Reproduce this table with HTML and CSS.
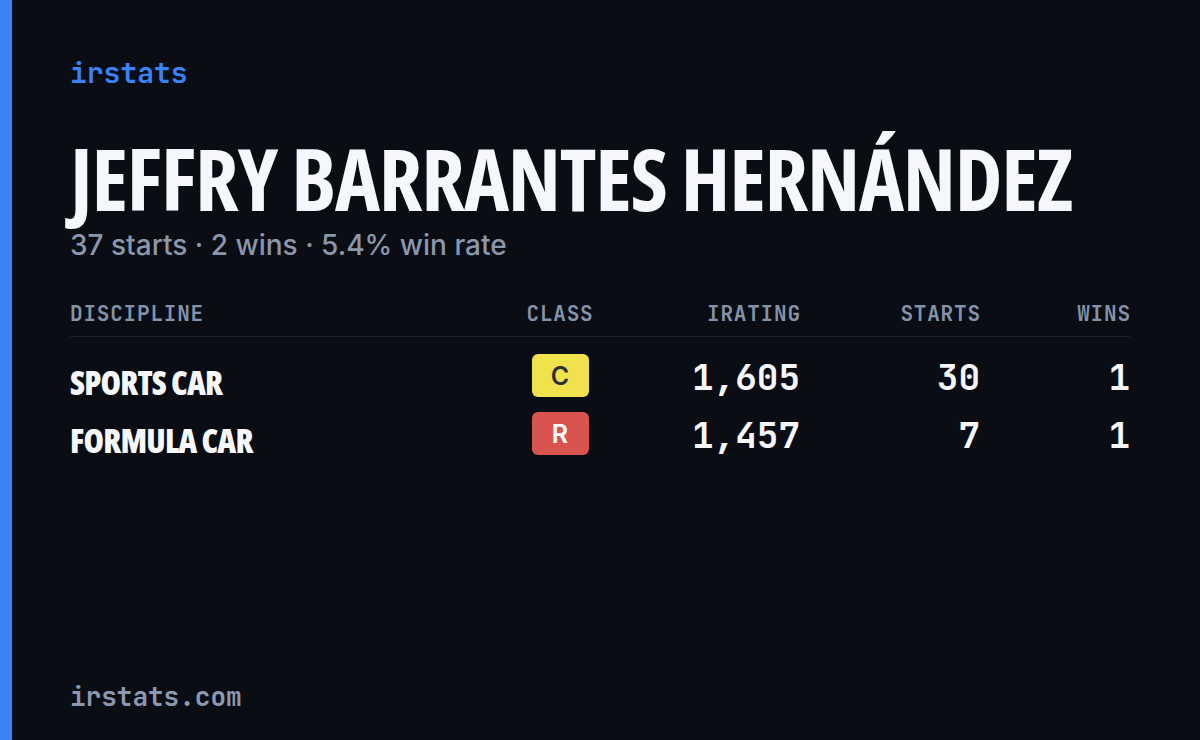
FILE: index.html
```html
<!DOCTYPE html>
<html lang="es">
<head>
<meta charset="utf-8">
<title>irstats</title>
<link rel="stylesheet" href="styles.css">
</head>
<body>
<div class="card">
  <div class="accent"></div>
  <main class="content">
    <div class="logo">irstats</div>
    <h1 class="name">JEFFRY BARRANTES HERNÁNDEZ</h1>
    <p class="summary">37 starts · 2 wins · 5.4% win rate</p>
    <div class="table">
      <div class="row head">
        <div class="cell left">DISCIPLINE</div>
        <div class="cell center">CLASS</div>
        <div class="cell right">IRATING</div>
        <div class="cell right">STARTS</div>
        <div class="cell right">WINS</div>
      </div>
      <div class="body">
        <div class="row item">
          <div class="cell label">SPORTS CAR</div>
          <div class="cell center"><span class="badge badge-c">C</span></div>
          <div class="cell right num">1,605</div>
          <div class="cell right num">30</div>
          <div class="cell right num">1</div>
        </div>
        <div class="row item">
          <div class="cell label">FORMULA CAR</div>
          <div class="cell center"><span class="badge badge-r">R</span></div>
          <div class="cell right num">1,457</div>
          <div class="cell right num">7</div>
          <div class="cell right num">1</div>
        </div>
      </div>
    </div>
    <div class="footer">irstats.com</div>
  </main>
</div>
</body>
</html>
```
FILE: styles.css
```css
html, body {
  margin: 0;
  padding: 0;
  background: #0a0d14;
}
.card {
  display: flex;
  width: 1200px;
  height: 740px;
  background: #0a0d14;
  overflow: hidden;
}
.accent {
  width: 12px;
  flex: 0 0 12px;
  background: #3b82f6;
}
.content {
  flex: 1;
  display: flex;
  flex-direction: column;
  padding: 57px 70px 27px 58px;
  box-sizing: border-box;
  height: 740px;
}
.logo {
  font-family: "JetBrains Mono", "DejaVu Sans Mono", monospace;
  font-size: 28px;
  line-height: 32px;
  font-weight: 600;
  color: #3b82f6;
}
.name {
  margin: 47px 0 0 0;
  font-family: "Open Sans", sans-serif;
  font-stretch: 75%;
  font-weight: 720;
  font-size: 85.5px;
  line-height: 1;
  letter-spacing: -1.2px;
  color: #f5f7fb;
  white-space: nowrap;
}
.summary {
  margin: 6px 0 0 0;
  font-family: "Inter", sans-serif;
  font-size: 28px;
  line-height: 34px;
  font-weight: 500;
  color: #8b97ab;
}
.table {
  margin-top: 40px;
}
.row {
  display: grid;
  grid-template-columns: 430px 120px 180px 180px 150px;
  align-items: center;
}
.head {
  font-family: "JetBrains Mono", "DejaVu Sans Mono", monospace;
  font-size: 21px;
  line-height: 24px;
  font-weight: 600;
  letter-spacing: 0.8px;
  color: #8593aa;
  padding-bottom: 10px;
  border-bottom: 1px solid #1b1f2d;
}
.head .right {
  margin-right: -0.8px;
}
.body {
  padding-top: 10px;
}
.item {
  height: 58px;
}
.cell.left { text-align: left; }
.cell.center { text-align: center; }
.cell.right { text-align: right; }
.label {
  font-family: "Open Sans", sans-serif;
  font-stretch: 75%;
  font-weight: 760;
  font-size: 33px;
  line-height: 40px;
  letter-spacing: -0.8px;
  color: #f5f7fb;
  padding-top: 14px;
  white-space: nowrap;
}
.num {
  font-family: "JetBrains Mono", "DejaVu Sans Mono", monospace;
  font-size: 36px;
  line-height: 40px;
  font-weight: 600;
  color: #f5f7fb;
  padding-top: 3px;
}
.badge {
  display: inline-flex;
  align-items: center;
  justify-content: center;
  width: 57px;
  height: 43px;
  border-radius: 6px;
  font-family: "Inter", sans-serif;
  font-size: 25px;
  font-weight: 600;
  vertical-align: middle;
}
.badge-c {
  background: #f0e24c;
  color: #2f3035;
}
.badge-r {
  background: #d9534f;
  color: #ffffff;
}
.footer {
  margin-top: auto;
  font-family: "JetBrains Mono", "DejaVu Sans Mono", monospace;
  font-size: 26px;
  line-height: 32px;
  font-weight: 600;
  color: #8a99b1;
}
```
